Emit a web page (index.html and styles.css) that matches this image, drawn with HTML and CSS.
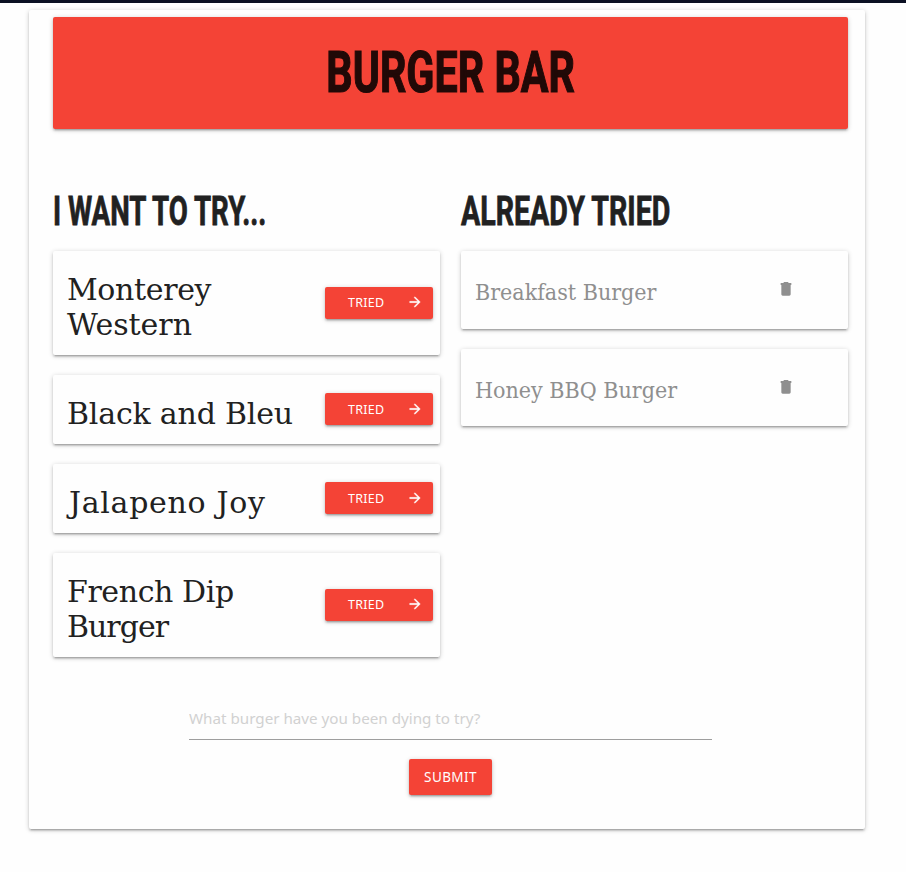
FILE: index.html
```html
<!DOCTYPE html>
<html lang="en">
<head>
<meta charset="utf-8">
<title>Burger Bar</title>
<link rel="stylesheet" href="styles.css">
</head>
<body>
<svg class="sprite" aria-hidden="true">
  <symbol id="arrow" viewBox="0 0 24 24"><path d="M12 4l-1.41 1.41L16.17 11H4v2h12.17l-5.58 5.59L12 20l8-8z"/></symbol>
  <symbol id="trash" viewBox="0 0 24 24"><path d="M5 20c0 1.1.9 2 2 2h10c1.1 0 2-.9 2-2V6H5v14zM20 3h-4l-1-1.500H9L8 3H4v3h16V3z"/></symbol>
</svg>
<div class="topbar"></div>
<main class="panel">
  <header class="banner"><h1><span>BURGER BAR</span></h1></header>
  <div class="columns">
    <section>
      <h2><span class="want">I WANT TO TRY...</span></h2>
      <article class="card"><p class="name"><span class="w1">Monterey</span><br><span class="w2">Western</span></p><button class="btn tried">TRIED<svg><use href="#arrow"/></svg></button></article>
      <article class="card"><p class="name"><span class="w3">Black and Bleu</span></p><button class="btn tried">TRIED<svg><use href="#arrow"/></svg></button></article>
      <article class="card"><p class="name"><span class="w4">Jalapeno Joy</span></p><button class="btn tried">TRIED<svg><use href="#arrow"/></svg></button></article>
      <article class="card"><p class="name"><span class="w5">French Dip</span><br><span class="w6">Burger</span></p><button class="btn tried">TRIED<svg><use href="#arrow"/></svg></button></article>
    </section>
    <section>
      <h2><span class="already">ALREADY TRIED</span></h2>
      <article class="card eaten"><p class="name"><span>Breakfast Burger</span></p><svg class="trash"><use href="#trash"/></svg></article>
      <article class="card eaten"><p class="name"><span>Honey BBQ Burger</span></p><svg class="trash"><use href="#trash"/></svg></article>
    </section>
  </div>
  <form class="entry">
    <input type="text" placeholder="What burger have you been dying to try?">
    <button type="button" class="btn submit">SUBMIT</button>
  </form>
</main>
</body>
</html>
```
FILE: styles.css
```css
* { box-sizing: border-box; }
html { background: #fefefe; }
body { margin: 0; min-height: 100vh; background: #fefefe; color: #212121; font-family: "Noto Sans", sans-serif; }
.sprite { display: none; }
.topbar { height: 3px; background: #0b1023; }
.panel, .banner, .card, .btn {
  border-radius: 2px;
  box-shadow: 0 2px 2px 0 rgba(0,0,0,.14), 0 3px 1px -2px rgba(0,0,0,.12), 0 1px 5px 0 rgba(0,0,0,.2);
}
.panel { width: 836px; height: 819px; margin: 7px 0 0 29px; padding: 7px 17px 0 24px; background: #fefefe; }
.banner { width: 795px; height: 112px; background: #f44336; display: flex; align-items: center; justify-content: center; }
h1, h2, p { margin: 0; }
h1, h2 { font-family: Roboto, sans-serif; font-weight: 700; white-space: nowrap; }
h1 { font-size: 57px; line-height: 68px; color: #210907; -webkit-text-stroke: 1.2px #210907; }
h1 span, h2 span { display: inline-block; }
h1 span { transform: scaleX(.724); }
h2 { font-size: 41px; line-height: 48px; height: 65px; padding-top: 1px; -webkit-text-stroke: .8px #212121; }
h2 span { transform-origin: 0 50%; }
.want { transform: scaleX(.675); }
.already { transform: scaleX(.697); }
.columns { display: grid; grid-template-columns: 387px 387px; gap: 21px; margin-top: 57px; }
.card { display: flex; align-items: center; justify-content: space-between; min-height: 69px; margin-bottom: 20px; padding: 21px 7px 13px 14px; background: #fefefe; }
.name { font-family: "DejaVu Serif", serif; font-size: 30px; line-height: 35px; white-space: nowrap; }
.w1 { letter-spacing: -.35px; }
.w3 { letter-spacing: -.2px; }
.w4 { letter-spacing: .7px; margin-left: 2px; }
.w5 { letter-spacing: -.4px; }
.w6 { letter-spacing: -1px; }
.btn { border: 0; background: #f44336; color: #fff; font-family: "Noto Sans", sans-serif; cursor: pointer; }
.tried { display: flex; align-items: center; flex: none; width: 108px; height: 32.4px; margin: -14.600px 0 -6px; padding: 0 10px 0 23px; font-size: 12.5px; letter-spacing: .3px; justify-content: space-between; }
.tried svg { width: 16px; height: 16px; margin-top: -1px; fill: #fff; stroke: #fff; stroke-width: .5px; }
.eaten { height: 77.5px; padding-top: 19px; padding-bottom: 13px; color: #8f8f8f; }
.eaten .name { font-family: "DejaVu Serif Condensed", "DejaVu Serif", serif; font-size: 23px; }
.trash { width: 16px; height: 16px; margin: -7px 47px 0 0; fill: #8f8f8f; }
.entry { width: 523px; margin: 19px 0 0 136px; display: flex; flex-direction: column; align-items: center; }
input { width: 100%; height: 44px; border: 0; border-bottom: 1px solid #9e9e9e; padding: 0; background: none; font: 15.2px "Noto Sans", sans-serif; outline: 0; }
input::placeholder { color: #d1d1d1; }
.submit { width: 83px; height: 36px; margin-top: 19px; padding: 0; font-size: 13.5px; letter-spacing: .4px; }
```
